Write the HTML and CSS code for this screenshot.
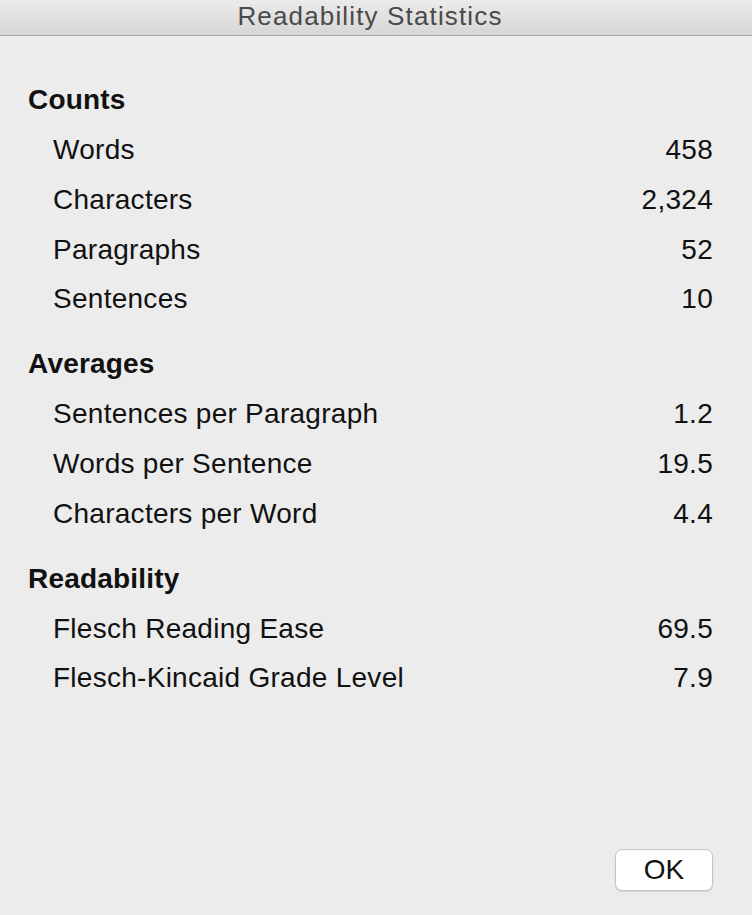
FILE: index.html
```html
<!DOCTYPE html>
<html>
<head>
<meta charset="utf-8">
<link rel="stylesheet" href="styles.css">
</head>
<body>
<div class="window">
  <div class="titlebar">Readability Statistics</div>
  <div class="content">
    <div class="section">
      <div class="heading">Counts</div>
      <div class="row"><span>Words</span><span>458</span></div>
      <div class="row"><span>Characters</span><span>2,324</span></div>
      <div class="row"><span>Paragraphs</span><span>52</span></div>
      <div class="row"><span>Sentences</span><span>10</span></div>
    </div>
    <div class="section">
      <div class="heading">Averages</div>
      <div class="row"><span>Sentences per Paragraph</span><span>1.2</span></div>
      <div class="row"><span>Words per Sentence</span><span>19.5</span></div>
      <div class="row"><span>Characters per Word</span><span>4.4</span></div>
    </div>
    <div class="section">
      <div class="heading">Readability</div>
      <div class="row"><span>Flesch Reading Ease</span><span>69.5</span></div>
      <div class="row"><span>Flesch-Kincaid Grade Level</span><span>7.9</span></div>
    </div>
  </div>
  <div class="footer">
    <button class="ok">OK</button>
  </div>
</div>
</body>
</html>
```
FILE: styles.css
```css
html, body {
  margin: 0;
  padding: 0;
  background: #ececec;
}
.window {
  width: 752px;
  height: 915px;
  display: flex;
  flex-direction: column;
  background: #ececec;
  font-family: "Liberation Sans", Arial, sans-serif;
  color: #111;
}
.titlebar {
  height: 35px;
  line-height: 33px;
  border-bottom: 1px solid #a8a8a8;
  background: linear-gradient(#ebebeb, #d6d6d6);
  text-align: center;
  font-size: 26px;
  color: #4a4a4a;
  letter-spacing: 1.15px;
  padding-right: 12px;
}
.content {
  padding: 39px 39px 0 28px;
  flex: 1;
}
.section + .section {
  margin-top: 15px;
}
.heading {
  height: 50px;
  line-height: 50px;
  font-size: 28px;
  font-weight: bold;
  letter-spacing: 0.2px;
}
.row {
  display: flex;
  justify-content: space-between;
  height: 49.8px;
  line-height: 49.8px;
  font-size: 28px;
  letter-spacing: 0.27px;
  padding-left: 25px;
}
.footer {
  display: flex;
  justify-content: flex-end;
  padding: 0 39px 24px 0;
}
.ok {
  width: 98px;
  height: 42px;
  background: #fff;
  border: 1px solid #c4c4c4;
  border-radius: 7px;
  box-shadow: 0 1px 1px rgba(0,0,0,0.12);
  font-family: "Liberation Sans", Arial, sans-serif;
  font-size: 28px;
  color: #111;
  padding: 0;
}
```
